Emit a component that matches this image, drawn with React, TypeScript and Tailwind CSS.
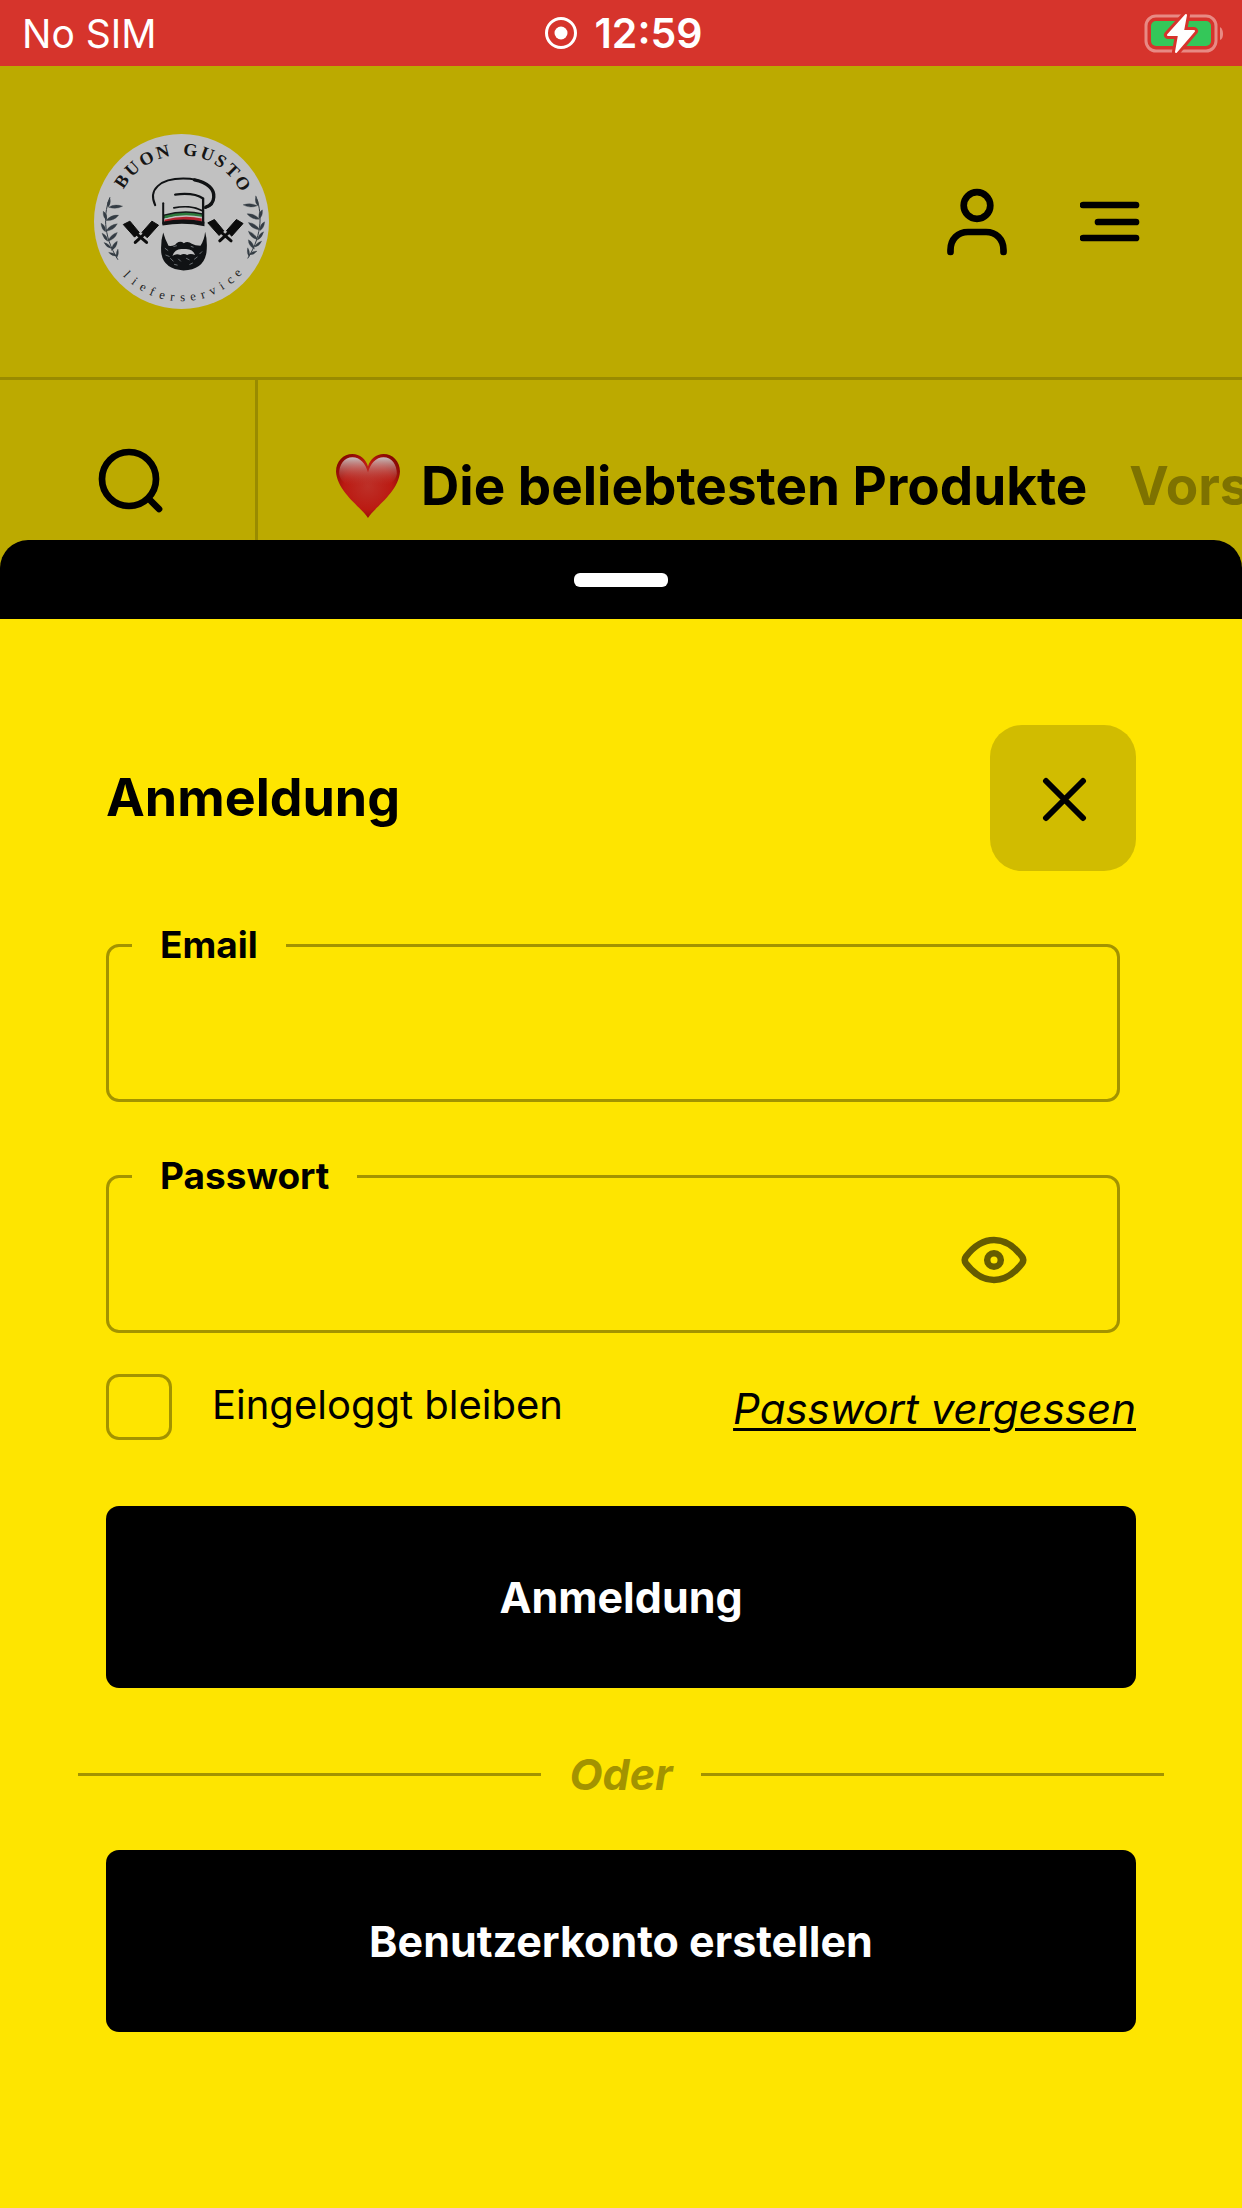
import { useState } from "react";
import type { ReactNode } from "react";

/** Letters round the badge, each with its angle in degrees from the top. */
const BADGE_TOP: [string, number][] = [
  ["B", -56],
  ["U", -43],
  ["O", -29],
  ["N", -15],
  ["G", 7],
  ["U", 21],
  ["S", 33],
  ["T", 45],
  ["O", 58],
];

const BADGE_BOTTOM = "lieferservice".split("");

function Sprig() {
  return (
    <g fill="#343c44" stroke="#343c44">
      <path d="M76 218C58 262 52 330 100 406" fill="none" strokeWidth="3" />
      <path
        d="M76 222q-12 14-6 26q10-10 6-26ZM114 245q-24-8-42 3q22 8 42-3ZM56 260q-2 20 10 26q4-16-10-26ZM102 272q-22-2-38 16q24 2 38-16ZM49 296q2 20 14 26q2-18-14-26ZM98 298q-22 2-34 22q24-2 34-22ZM52 326q6 20 18 24q-2-18-18-24ZM98 324q-20 6-28 26q22-6 28-26ZM58 354q8 16 22 18q-6-14-22-18ZM98 350q-16 8-18 28q18-10 18-28ZM72 384q12 14 24 10q-8-10-24-10ZM100 374q-8 10-4 26q8-10 4-26Z"
        strokeWidth="1"
      />
    </g>
  );
}

function Cleavers() {
  return (
    <g>
      <path
        d="M116 300L136 290L164 324L150 338ZM222 302L202 290L172 324L188 340Z"
        fill="#0c0c0c"
        stroke="#0c0c0c"
        strokeWidth="3"
        strokeLinejoin="round"
      />
      <path
        d="M156 328L186 354M180 328L152 354"
        stroke="#0c0c0c"
        strokeWidth="9"
        strokeLinecap="round"
      />
    </g>
  );
}

function Logo() {
  return (
    <svg
      viewBox="28 28 526 526"
      className="size-[175px]"
      role="img"
      aria-label="Buon Gusto Lieferservice"
    >
      <circle cx="291" cy="291" r="263" fill="#c1c1c1" />
      {BADGE_TOP.map(([letter, angle], i) => (
        <text
          key={i}
          x="291"
          y="92"
          textAnchor="middle"
          transform={`rotate(${angle} 291 291)`}
          className="fill-[#151515] font-['Liberation_Serif',serif] text-[54px] font-bold"
        >
          {letter}
        </text>
      ))}
      {BADGE_BOTTOM.map((letter, i) => (
        <text
          key={i}
          x="291"
          y="531"
          textAnchor="middle"
          transform={`rotate(${46 - i * 7.8} 291 291)`}
          className="fill-[#222] font-['Liberation_Serif',serif] text-[38px]"
        >
          {letter}
        </text>
      ))}
      <Sprig />
      <g transform="translate(590 -4) scale(-1 1)">
        <Sprig />
      </g>
      <Cleavers />
      <g transform="translate(254 -5)">
        <Cleavers />
      </g>

      {/* hat */}
      <g fill="none" stroke="#101214" strokeLinecap="round">
        <path d="M212 242C190 196 226 162 296 162C356 162 390 188 388 218C387 236 376 246 362 250" strokeWidth="6" />
        <path d="M330 166C370 174 390 194 388 218C387 234 378 244 364 248" strokeWidth="10" />
        <path d="M272 210C306 206 336 208 356 222V296" strokeWidth="7" />
        <path d="M236 236V298" strokeWidth="6" />
        <path d="M268 250C296 244 330 246 352 258" strokeWidth="5" />
      </g>
      <path d="M238 270Q298 252 354 266V276Q298 262 238 282Z" fill="#14181a" />
      <path d="M240 274Q298 258 352 270V277Q298 265 240 281Z" fill="#2d7a3c" />
      <path d="M240 286Q298 270 352 282V291Q298 281 240 293Z" fill="#b3222e" />
      <path d="M234 292Q298 278 360 292V305Q298 292 234 303Z" fill="#101214" />

      {/* beard */}
      <path
        d="M236 324Q242 346 252 364Q270 366 276 356Q288 348 298 356Q310 348 322 358Q332 364 348 364Q360 346 362 322Q370 350 366 384Q358 436 297 438Q236 434 230 384Q228 350 236 324Z"
        fill="#101214"
      />
      <path
        d="M264 394Q272 370 297 374Q324 370 332 392Q318 386 308 392Q298 386 288 392Q276 386 264 394Z"
        fill="#c1c1c1"
      />
      <path
        d="M242 372l8 6M244 392l10 4M258 402l8 8M282 404l6 6M306 402l8 4M330 404l8-6M346 388l6-6M270 420l8 2M316 420l8-4M268 366l8-2M320 366l6 2"
        stroke="#6d7276"
        strokeWidth="3"
        strokeLinecap="round"
      />
    </svg>
  );
}

function Heart() {
  return (
    <svg viewBox="0 0 64 64" className="size-[66px] shrink-0" aria-hidden="true">
      <defs>
        <radialGradient id="heart-fill" cx="0.5" cy="0.5" r="0.62">
          <stop offset="0" stopColor="#bd3028" />
          <stop offset="0.6" stopColor="#bb1a12" />
          <stop offset="1" stopColor="#7d0500" />
        </radialGradient>
        <linearGradient id="heart-shine" x1="0" y1="0" x2="0" y2="1">
          <stop offset="0" stopColor="#c6c0c0" />
          <stop offset="0.9" stopColor="#bd3a33" stopOpacity="0" />
        </linearGradient>
      </defs>
      <path
        d="M32 63C26 53 2 38 1 18C1 8 8 1 17 1C24 1 30 6 32 13C34 6 40 1 47 1C56 1 63 8 63 18C62 38 38 53 32 63Z"
        fill="url(#heart-fill)"
      />
      <path
        d="M32 19C30 10 24 4 17 4C9 4 4 11 4 20C6 32 20 34 32 34C44 34 58 32 60 20C60 11 55 4 47 4C40 4 34 10 32 19Z"
        fill="url(#heart-shine)"
      />
    </svg>
  );
}

function StatusBar() {
  return (
    <div className="grid h-[66px] grid-cols-3 items-center bg-[#d6342c] pl-[22px] pr-[17px] text-white">
      <span className="text-[39px] leading-none">No SIM</span>
      <span className="flex items-center justify-center gap-[18px] text-[41px] font-semibold leading-none">
        <svg viewBox="0 0 32 32" className="size-8" aria-hidden="true">
          <circle cx="16" cy="16" r="14.5" fill="none" stroke="currentColor" strokeWidth="3" />
          <circle cx="16" cy="16" r="6.5" fill="currentColor" />
        </svg>
        12:59
      </span>
      <svg
        viewBox="0 0 82 42"
        className="h-[42px] w-[82px] justify-self-end"
        role="img"
        aria-label="Battery charging"
      >
        <rect x="3" y="4" width="70" height="35" rx="10" fill="none" stroke="#e88a84" strokeWidth="3" />
        <path d="M77 15Q80 17 80 22T77 28Z" fill="#e88a84" />
        <rect x="8" y="9" width="60" height="25" rx="5" fill="#34c759" />
        <path
          d="M43 3L25 23H36L33 40L51 19H40Z"
          fill="#fff"
          stroke="#d6342c"
          strokeWidth="8"
          strokeLinejoin="round"
        />
        <path
          d="M43 3L25 23H36L33 40L51 19H40Z"
          fill="#fff"
          stroke="#fff"
          strokeWidth="2"
          strokeLinejoin="round"
        />
      </svg>
    </div>
  );
}

function Header() {
  return (
    <header className="flex h-[314px] items-start justify-between border-b-[3px] border-[#998b00] pl-[94px] pr-[102px] pt-[68px]">
      <a href="#start">
        <Logo />
      </a>
      <div className="flex gap-[72px] pt-[54px]">
        <button type="button" aria-label="Konto">
          <svg
            viewBox="0 0 62 68"
            className="h-[68px] w-[62px]"
            fill="none"
            stroke="currentColor"
            strokeWidth="6.7"
            strokeLinecap="round"
          >
            <circle cx="31" cy="17.5" r="13.3" />
            <path d="M4.500 64V62C4.500 51 12 44 22 44H40C50 44 57.500 51 57.500 62V64" />
          </svg>
        </button>
        <button type="button" aria-label="Menü">
          <svg
            viewBox="0 0 60 68"
            className="h-[68px] w-[60px]"
            stroke="currentColor"
            strokeWidth="6.7"
            strokeLinecap="round"
          >
            <path d="M3 17H56M18 34H56M3 50H56" />
          </svg>
        </button>
      </div>
    </header>
  );
}

function CategoryBar() {
  return (
    <div className="flex h-[160px] items-stretch overflow-hidden">
      <button
        type="button"
        aria-label="Suche"
        className="flex w-[258px] shrink-0 items-center border-r-[3px] border-[#998b00] pl-[97px] pt-[42px]"
      >
        <svg
          viewBox="0 0 66 66"
          className="size-[66px]"
          fill="none"
          stroke="currentColor"
          strokeWidth="6.7"
          strokeLinecap="round"
        >
          <circle cx="32" cy="31" r="27" />
          <path d="M52 51L62 61" />
        </svg>
      </button>
      <nav className="flex items-center gap-[42px] whitespace-nowrap pl-[77px] pt-[52px] text-[53px] font-bold leading-none">
        <a href="#beliebt" className="flex items-center gap-5">
          <Heart />
          Die beliebtesten Produkte
        </a>
        <a href="#vorspeisen" className="text-[#7e7200]">
          Vorspeisen
        </a>
      </nav>
    </div>
  );
}

interface FieldProps {
  id: string;
  label: string;
  type: string;
  children?: ReactNode;
}

function Field({ id, label, type, children }: FieldProps) {
  return (
    <fieldset className="mr-4 mt-[52px] min-w-0 rounded-[13px] border-[3px] border-[#a39300]">
      <legend className="ml-[23px] px-7 text-[37px] font-bold leading-[44px]">
        <label htmlFor={id}>{label}</label>
      </legend>
      <div className="flex h-[132px] items-center">
        <input
          id={id}
          type={type}
          className="h-full min-w-0 flex-1 bg-transparent px-[50px] text-[42px] outline-none"
        />
        {children}
      </div>
    </fieldset>
  );
}

function LoginSheet() {
  const [showPassword, setShowPassword] = useState(false);

  return (
    <section
      aria-labelledby="sheet-title"
      className="flex flex-1 flex-col overflow-hidden rounded-t-[28px] bg-[#fee500]"
    >
      <div className="flex h-[79px] shrink-0 items-center justify-center bg-black">
        <div className="h-[14px] w-[94px] rounded-md bg-white" />
      </div>

      <form className="px-[106px] pb-20 pt-[106px]" onSubmit={(e) => e.preventDefault()}>
        <div className="flex items-center justify-between">
          <h1 id="sheet-title" className="text-[52px] font-bold leading-none">
            Anmeldung
          </h1>
          <button
            type="button"
            aria-label="Schließen"
            className="flex size-[146px] items-center justify-center rounded-[32px] bg-[#d1bc00]"
          >
            <svg viewBox="0 0 48 48" className="size-12" stroke="currentColor" strokeWidth="6" strokeLinecap="round">
              <path d="M7 7L44 44M44 7L7 44" />
            </svg>
          </button>
        </div>

        <Field id="email" label="Email" type="email" />
        <Field id="password" label="Passwort" type={showPassword ? "text" : "password"}>
          <button
            type="button"
            aria-label="Passwort anzeigen"
            aria-pressed={showPassword}
            onClick={() => setShowPassword((v) => !v)}
            className="mb-2 mr-[90px] shrink-0 text-[#665c00]"
          >
            <svg viewBox="0 0 66 50" className="h-[50px] w-[66px]" fill="none" stroke="currentColor">
              <path
                d="M5 21.500C13 11 22 5 33 5S53 11 61 21.500Q63.500 25 61 28.500C53 39 44 45 33 45S13 39 5 28.500Q2.500 25 5 21.500Z"
                strokeWidth="6.5"
              />
              <circle cx="33" cy="25" r="6.8" strokeWidth="6.5" />
            </svg>
          </button>
        </Field>

        <div className="mt-[41px] flex items-start justify-between">
          <div className="flex items-start gap-[40px]">
            <input
              id="remember"
              type="checkbox"
              className="size-[66px] shrink-0 appearance-none rounded-[13px] border-[3px] border-[#a39300] checked:bg-black"
            />
            <label htmlFor="remember" className="text-[40px] leading-[62px]">
              Eingeloggt bleiben
            </label>
          </div>
          <a
            href="#passwort"
            className="mt-1 text-[42px] italic leading-[62px] underline decoration-[3px] underline-offset-4"
          >
            Passwort vergessen
          </a>
        </div>

        <button
          type="submit"
          className="mt-[66px] h-[182px] w-full rounded-[13px] bg-black text-[43px] font-bold text-white"
        >
          Anmeldung
        </button>

        <div className="-mx-7 mt-[60px] flex h-[52px] items-center gap-[28px] text-[#a39300]">
          <div className="h-[3px] flex-1 bg-[#a39300]" />
          <span className="text-[43px] font-bold italic leading-none">Oder</span>
          <div className="h-[3px] flex-1 bg-[#a39300]" />
        </div>

        <button
          type="button"
          className="mt-[50px] h-[182px] w-full rounded-[13px] bg-black text-[43px] font-bold text-white"
        >
          Benutzerkonto erstellen
        </button>
      </form>
    </section>
  );
}

export default function App() {
  return (
    <div className="flex min-h-screen flex-col overflow-hidden bg-[#bcaa00] font-['Inter',sans-serif] text-black">
      <StatusBar />
      <Header />
      <CategoryBar />
      <LoginSheet />
    </div>
  );
}
